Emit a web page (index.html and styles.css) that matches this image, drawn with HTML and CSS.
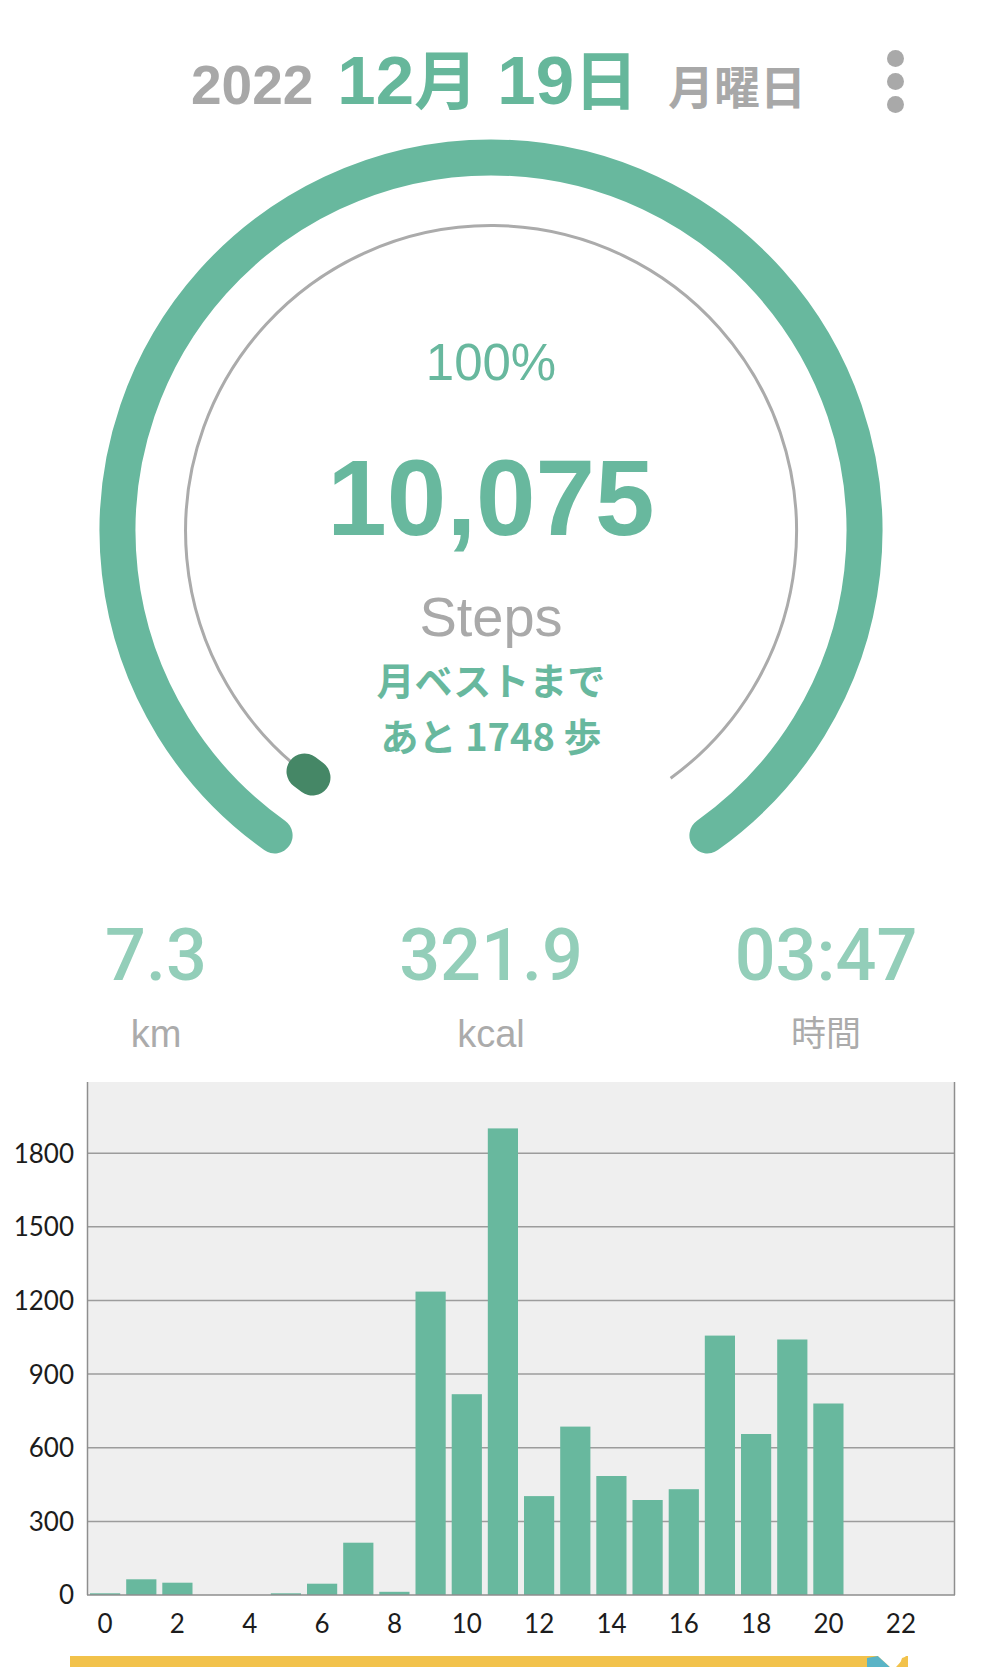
FILE: index.html
```html
<!DOCTYPE html>
<html>
<head>
<meta charset="utf-8">
<title>歩数</title>
<link rel="stylesheet" href="styles.css">
</head>
<body>

<header class="date-bar">
  <div class="date">
    <span class="year">2022</span><span class="md">12<span class="kanji">月</span> 19<span class="kanji">日</span></span><span class="dow">月曜日</span>
  </div>
  <div class="menu"><i></i><i></i><i></i></div>
</header>

<!-- 今日の歩数メーター -->
<section class="gauge">
  <svg class="gauge-ring" width="982" height="760" viewBox="0 0 982 760">
    <path d="M 274.6 705.4 A 373.5 373.5 0 1 1 707.4 705.4" fill="none" stroke="#68b89e" stroke-width="36" stroke-linecap="round"/>
    <path d="M 307.2 645 A 305.5 305.5 0 1 1 670.6 648.2" fill="none" stroke="#ababab" stroke-width="3"/>
    <line x1="304.5" y1="641.5" x2="312.5" y2="647.5" stroke="#458766" stroke-width="36" stroke-linecap="round"/>
  </svg>
  <div class="gauge-text">
    <div class="pct">100%</div>
    <div class="steps-num">10,075</div>
    <div class="steps-label">Steps</div>
    <div class="best">月ベストまで<br>あと 1748 歩</div>
  </div>
</section>

<section class="stats">
  <div class="stat">
    <div class="stat-value">7.3</div>
    <div class="stat-label">km</div>
  </div>
  <div class="stat">
    <div class="stat-value">321.9</div>
    <div class="stat-label">kcal</div>
  </div>
  <div class="stat">
    <div class="stat-value">03:47</div>
    <div class="stat-label jp">時間</div>
  </div>
</section>

<!-- 時間別グラフ -->
<svg class="chart" width="982" height="587" viewBox="0 0 982 587">
  <rect x="87" y="13" width="868" height="513" fill="#efefef"/>
  <g stroke="#9c9c9c" stroke-width="1.5">
    <line x1="87" y1="84.2" x2="955" y2="84.2"/>
    <line x1="87" y1="157.8" x2="955" y2="157.8"/>
    <line x1="87" y1="231.5" x2="955" y2="231.5"/>
    <line x1="87" y1="305.1" x2="955" y2="305.1"/>
    <line x1="87" y1="378.7" x2="955" y2="378.7"/>
    <line x1="87" y1="452.4" x2="955" y2="452.4"/>
  </g>
  <g fill="#68b89e">
    <rect x="90" y="524.3" width="30.2" height="1.7"/>
    <rect x="126.2" y="510.3" width="30.2" height="15.7"/>
    <rect x="162.3" y="513.7" width="30.2" height="12.3"/>
    <rect x="270.8" y="524.3" width="30.2" height="1.7"/>
    <rect x="307" y="514.7" width="30.2" height="11.3"/>
    <rect x="343.2" y="473.7" width="30.2" height="52.3"/>
    <rect x="379.3" y="522.8" width="30.2" height="3.2"/>
    <rect x="415.5" y="222.6" width="30.2" height="303.4"/>
    <rect x="451.7" y="325.2" width="30.2" height="200.8"/>
    <rect x="487.8" y="59.4" width="30.2" height="466.6"/>
    <rect x="524" y="427.1" width="30.2" height="98.9"/>
    <rect x="560.2" y="357.6" width="30.2" height="168.4"/>
    <rect x="596.3" y="407" width="30.2" height="119"/>
    <rect x="632.5" y="431" width="30.2" height="95"/>
    <rect x="668.7" y="420.2" width="30.2" height="105.8"/>
    <rect x="704.8" y="266.6" width="30.2" height="259.4"/>
    <rect x="741" y="365" width="30.2" height="161"/>
    <rect x="777.2" y="270.5" width="30.2" height="255.5"/>
    <rect x="813.3" y="334.5" width="30.2" height="191.5"/>
  </g>
  <g stroke="#8e8e8e" stroke-width="1.5" fill="none">
    <line x1="87.5" y1="13" x2="87.5" y2="526"/>
    <line x1="954.5" y1="13" x2="954.5" y2="526"/>
    <line x1="87" y1="526" x2="955" y2="526"/>
  </g>
  <g class="axis-y" text-anchor="end">
    <text x="74" y="93.6">1800</text>
    <text x="74" y="167.2">1500</text>
    <text x="74" y="240.9">1200</text>
    <text x="74" y="314.5">900</text>
    <text x="74" y="388.1">600</text>
    <text x="74" y="461.8">300</text>
    <text x="74" y="535.4">0</text>
  </g>
  <g class="axis-x" text-anchor="middle">
    <text x="105.1" y="564">0</text>
    <text x="177.4" y="564">2</text>
    <text x="249.8" y="564">4</text>
    <text x="322.1" y="564">6</text>
    <text x="394.5" y="564">8</text>
    <text x="466.8" y="564">10</text>
    <text x="539.2" y="564">12</text>
    <text x="611.5" y="564">14</text>
    <text x="683.8" y="564">16</text>
    <text x="756.2" y="564">18</text>
    <text x="828.5" y="564">20</text>
    <text x="900.9" y="564">22</text>
  </g>
</svg>

<div class="banner">
  <svg width="838" height="11" viewBox="0 0 838 11">
    <rect width="838" height="11" fill="#f2c24b"/>
    <polygon points="797,2 808,0 820,11 797,11" fill="#5ab4c6"/>
    <polygon points="808,0 836,0 826,11 820,11" fill="#ffffff"/>
    <polygon points="832,2 838,0 838,11 829,11" fill="#f2c24b"/>
  </svg>
</div>

</body>
</html>
```

FILE: styles.css
```css
/* styles.css */

body {
  margin: 0;
  width: 982px;
  background: #fff;
  font-family: "Liberation Sans", "Noto Sans CJK JP", sans-serif;
}

.date-bar {
  display: flex;
  align-items: flex-start;
  height: 130px;
  padding-left: 191px;
  box-sizing: border-box;
}
.date {
  margin-top: 46px;
  font-size: 69px;
  line-height: 1;
  font-weight: bold;
  white-space: nowrap;
}
.year {
  font-size: 55px;
  color: #a8a8a8;
  margin-right: 24px;
}
.md {
  color: #66b79b;
}
.md .kanji {
  font-size: 64px;
}
.dow {
  font-size: 46px;
  color: #a8a8a8;
  margin-left: 30px;
}
.menu {
  margin-left: auto;
  margin-right: 78px;
  margin-top: 50px;
  display: flex;
  flex-direction: column;
  gap: 6px;
}
.menu i {
  display: block;
  width: 17px;
  height: 17px;
  border-radius: 50%;
  background: #a9a9a9;
}

.gauge {
  position: relative;
  height: 760px;
}
.gauge-ring {
  display: block;
}
.gauge-text {
  position: absolute;
  top: 0;
  left: 0;
  right: 0;
  display: flex;
  flex-direction: column;
  align-items: center;
  padding-top: 207px;
  color: #68b89e;
  line-height: 1;
}
.pct {
  font-size: 51px;
}
.steps-num {
  margin-top: 57px;
  font-size: 107px;
  font-weight: bold;
}
.steps-label {
  margin-top: 37px;
  font-size: 56px;
  color: #a9a9a9;
}
.best {
  margin-top: 6px;
  font-family: "Noto Sans CJK JP", sans-serif;
  font-size: 38px;
  line-height: 56px;
  font-weight: bold;
  text-align: center;
}

.stats {
  display: grid;
  grid-template-columns: 312px 1fr 312px;
  margin-top: 30px;
  text-align: center;
}
.stat-value {
  font-family: Roboto, "Liberation Sans", sans-serif;
  font-weight: 500;
  font-size: 72px;
  line-height: 1;
  color: #93ceb9;
}
.stat-label {
  margin-top: 23px;
  font-size: 38px;
  line-height: 1;
  color: #ababab;
}
.stat-label.jp {
  font-size: 35px;
  line-height: 38px;
}

.chart {
  display: block;
  margin-top: 16px;
}
.chart text {
  font-family: Lato, "Liberation Sans", sans-serif;
  font-size: 26px;
  fill: #1c1c1c;
}

.banner {
  margin-left: 70px;
  height: 11px;
  overflow: hidden;
}
.banner svg {
  display: block;
}
```
